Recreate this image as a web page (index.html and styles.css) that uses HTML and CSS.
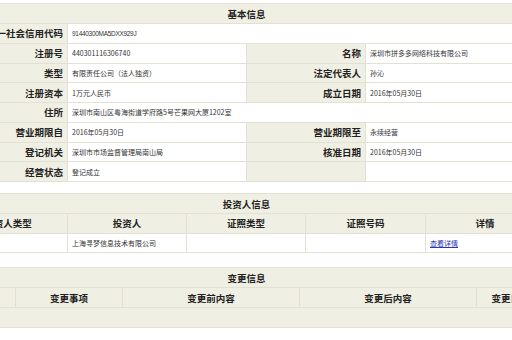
FILE: index.html
```html
<!DOCTYPE html>
<html lang="zh-CN">
<head>
<meta charset="utf-8">
<title>基本信息</title>
<link rel="stylesheet" href="styles.css">
</head>
<body>
<div class="page">
  <table class="grid basic">
    <colgroup><col class="w119"><col class="w179"><col class="w119"><col class="w179"></colgroup>
    <tr><th colspan="4" class="title">基本信息</th></tr>
    <tr><th class="lab">统一社会信用代码</th><td colspan="3" class="val code">91440300MA5DXX929J</td></tr>
    <tr><th class="lab">注册号</th><td class="val">440301116306740</td><th class="lab">名称</th><td class="val">深圳市拼多多网络科技有限公司</td></tr>
    <tr><th class="lab">类型</th><td class="val">有限责任公司（法人独资）</td><th class="lab">法定代表人</th><td class="val">孙沁</td></tr>
    <tr><th class="lab">注册资本</th><td class="val">1万元人民币</td><th class="lab">成立日期</th><td class="val">2016年05月30日</td></tr>
    <tr><th class="lab">住所</th><td colspan="3" class="val">深圳市南山区粤海街道学府路5号芒果网大厦1202室</td></tr>
    <tr><th class="lab">营业期限自</th><td class="val">2016年05月30日</td><th class="lab">营业期限至</th><td class="val">永续经营</td></tr>
    <tr><th class="lab">登记机关</th><td class="val">深圳市市场监督管理局南山局</td><th class="lab">核准日期</th><td class="val">2016年05月30日</td></tr>
    <tr><th class="lab">经营状态</th><td class="val">登记成立</td><th class="lab"></th><td class="val"></td></tr>
  </table>

  <table class="grid invest">
    <colgroup><col class="w119"><col class="w119"><col class="w119"><col class="w120"><col class="w119"></colgroup>
    <tr><th colspan="5" class="title">投资人信息</th></tr>
    <tr><th class="colh">投资人类型</th><th class="colh">投资人</th><th class="colh">证照类型</th><th class="colh">证照号码</th><th class="colh">详情</th></tr>
    <tr><td class="val"></td><td class="val">上海寻梦信息技术有限公司</td><td class="val"></td><td class="val"></td><td class="val"><a class="link" href="#">查看详情</a></td></tr>
  </table>

  <table class="grid change">
    <colgroup><col class="w67"><col class="w107"><col class="w177"><col class="w177"><col class="w68"></colgroup>
    <tr><th colspan="5" class="title">变更信息</th></tr>
    <tr><th class="colh">序号</th><th class="colh">变更事项</th><th class="colh">变更前内容</th><th class="colh">变更后内容</th><th class="colh">变更日期</th></tr>
    <tr><td colspan="5" class="empty"></td></tr>
  </table>
</div>
</body>
</html>
```

FILE: styles.css
```css
html, body {
  margin: 0;
  padding: 0;
  background: #ffffff;
  overflow: hidden;
  width: 512px;
  height: 340px;
}

.page {
  padding-top: 3px;
  font-family: "Noto Sans CJK SC", "Liberation Sans", sans-serif;
  color: #333333;
}

.grid {
  width: 596px;
  margin-left: -52px;
  border-collapse: collapse;
  table-layout: fixed;
}

.grid th,
.grid td {
  border: 1px solid #e2e1d3;
  padding: 0;
  overflow: hidden;
  white-space: nowrap;
}

.w67 { width: 67px; }
.w68 { width: 68px; }
.w107 { width: 107px; }
.w119 { width: 119px; }
.w120 { width: 120px; }
.w177 { width: 177px; }
.w179 { width: 179px; }

.grid .title {
  background: #f0efe3;
  height: 19px;
  font-size: 9.5px;
  font-weight: bold;
  text-align: center;
  color: #222222;
  border-left: none;
  border-right: none;
}

.basic tr { height: 19.75px; }

.grid .lab {
  background: #f0efe3;
  font-size: 9.5px;
  font-weight: bold;
  text-align: right;
  padding-right: 4px;
  color: #222222;
}

.grid .val {
  background: #ffffff;
  font-size: 7px;
  text-align: left;
  padding-left: 4px;
  color: #333333;
}

.grid .code {
  font-family: "Liberation Sans", sans-serif;
  letter-spacing: -0.3px;
  font-size: 6.5px;
}

.invest {
  margin-top: 11px;
}

.invest tr { height: 19.5px; }

.grid .colh {
  background: #f0efe3;
  font-size: 9.5px;
  font-weight: bold;
  text-align: center;
  color: #222222;
}

.link {
  color: #2a35b8;
  text-decoration: underline;
}

.change {
  margin-top: 14px;
}

.change tr { height: 20px; }

.grid .empty {
  background: #f0efe3;
  border-left: none;
  border-right: none;
}
```
